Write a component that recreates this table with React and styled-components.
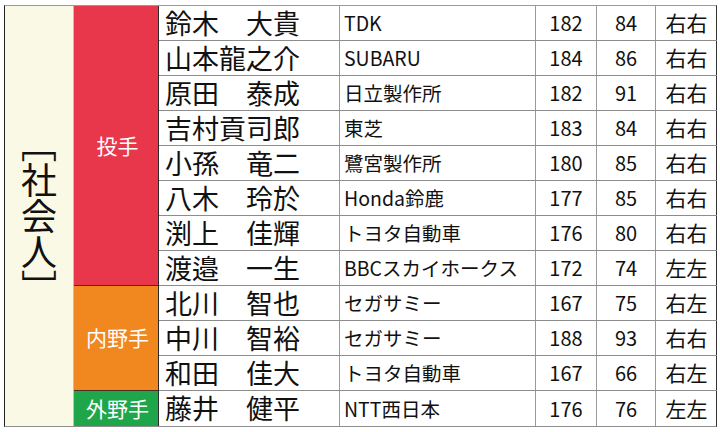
import React from 'react'
import styled, { createGlobalStyle } from 'styled-components'

const GlobalStyle = createGlobalStyle`
  html, body {
    margin: 0;
    padding: 0;
    background: #ffffff;
  }
  body {
    font-family: "Noto Sans CJK JP", "Noto Sans", sans-serif;
    color: #111;
  }
`

const ROW_H = 35

const Sheet = styled.div`
  display: flex;
  width: 711px;
  margin: 5px 0 0 4px;
  border-top: 1px solid #9a9a9a;
  border-left: 1px solid #222;
  border-right: 1px solid #333;
  border-bottom: 1px solid #8e8e8e;
`

const SectionCell = styled.div`
  width: 68px;
  flex: none;
  background: #faf9e6;
  border-right: 1px solid #c8c2a4;
  display: flex;
  align-items: center;
  justify-content: center;
`

const SectionLabel = styled.span`
  writing-mode: vertical-rl;
  font-size: 36px;
  line-height: 1;
  color: #111;
`

const Groups = styled.div`
  width: 85px;
  flex: none;
  display: flex;
  flex-direction: column;
  border-right: 1px solid #2a2a2a;
  box-sizing: border-box;
`

const GroupCell = styled.div`
  height: ${(p) => p.$span * ROW_H}px;
  box-sizing: border-box;
  background: ${(p) => p.$color};
  border-bottom: 1px solid #4a2e22;
  display: flex;
  align-items: center;
  justify-content: center;
  color: #fff;
  font-size: 21px;
  line-height: 1.2;
  padding-left: 3px;
  &:last-child {
    border-bottom: none;
  }
`

const Rows = styled.div`
  flex: 1;
  display: flex;
  flex-direction: column;
`

const Row = styled.div`
  display: grid;
  grid-template-columns: 181px 196px 61px 59px 61px;
  height: ${ROW_H}px;
  box-sizing: border-box;
  border-bottom: 1px solid #8c8c8c;
  &:last-child {
    border-bottom: none;
  }
`

const Cell = styled.div`
  display: flex;
  align-items: center;
  justify-content: ${(p) => (p.$center ? 'center' : 'flex-start')};
  padding-left: ${(p) => p.$pad || 0}px;
  font-size: ${(p) => p.$size}px;
  line-height: ${(p) => p.$lh || 1.2};
  white-space: nowrap;
  border-right: 1px solid #9a9a9a;
  &:last-child {
    border-right: none;
  }
`

const NameCell = styled(Cell).attrs({ $size: 27, $pad: 6, $lh: 1.05 })``
const TeamCell = styled(Cell).attrs({ $size: 19.5, $pad: 4 })``
const NumberCell = styled(Cell).attrs({ $size: 20, $center: true })``
const HandCell = styled(Cell).attrs({ $size: 21, $center: true })``

const groups = [
  { label: '投手', color: '#e8364b', span: 8 },
  { label: '内野手', color: '#f0871f', span: 3 },
  { label: '外野手', color: '#20a64a', span: 1 },
]

const players = [
  ['鈴木　大貴', 'TDK', 182, 84, '右右'],
  ['山本龍之介', 'SUBARU', 184, 86, '右右'],
  ['原田　泰成', '日立製作所', 182, 91, '右右'],
  ['吉村貢司郎', '東芝', 183, 84, '右右'],
  ['小孫　竜二', '鷺宮製作所', 180, 85, '右右'],
  ['八木　玲於', 'Honda鈴鹿', 177, 85, '右右'],
  ['渕上　佳輝', 'トヨタ自動車', 176, 80, '右右'],
  ['渡邉　一生', 'BBCスカイホークス', 172, 74, '左左'],
  ['北川　智也', 'セガサミー', 167, 75, '右左'],
  ['中川　智裕', 'セガサミー', 188, 93, '右右'],
  ['和田　佳大', 'トヨタ自動車', 167, 66, '右左'],
  ['藤井　健平', 'NTT西日本', 176, 76, '左左'],
]

const App = () => (
  <>
    <GlobalStyle />
    <Sheet>
      <SectionCell>
        <SectionLabel>［社会人］</SectionLabel>
      </SectionCell>
      <Groups>
        {groups.map((g) => (
          <GroupCell key={g.label} $span={g.span} $color={g.color}>
            {g.label}
          </GroupCell>
        ))}
      </Groups>
      <Rows>
        {players.map(([name, team, height, weight, hand]) => (
          <Row key={name}>
            <NameCell>{name}</NameCell>
            <TeamCell>{team}</TeamCell>
            <NumberCell>{height}</NumberCell>
            <NumberCell>{weight}</NumberCell>
            <HandCell>{hand}</HandCell>
          </Row>
        ))}
      </Rows>
    </Sheet>
  </>
)

export default App
